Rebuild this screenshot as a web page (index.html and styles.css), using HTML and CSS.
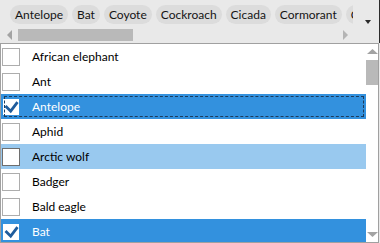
FILE: index.html
```html
<!DOCTYPE html>
<html>
<head>
<meta charset="utf-8">
<link rel="stylesheet" href="styles.css">
</head>
<body>
<div class="top">
  <div class="chips-row">
    <div class="chips">
      <span class="chip">Antelope</span>
      <span class="chip">Bat</span>
      <span class="chip">Coyote</span>
      <span class="chip">Cockroach</span>
      <span class="chip">Cicada</span>
      <span class="chip">Cormorant</span>
      <span class="chip">Crab</span>
    </div>
    <div class="dropdown">
      <svg width="6" height="4" viewBox="0 0 6 4"><path d="M0 0H6L3 4Z" fill="#2a2a2a"/></svg>
    </div>
  </div>
  <div class="hscroll">
    <svg class="harrow" width="5" height="10" viewBox="0 0 5 10"><path d="M5 0V10L0 5Z" fill="#a3a3a3"/></svg>
    <div class="htrack"><div class="hthumb"></div></div>
    <svg class="harrow" width="5" height="10" viewBox="0 0 5 10"><path d="M0 0V10L5 5Z" fill="#b4b4b4"/></svg>
  </div>
</div>
<div class="list">
  <div class="rows">
    <div class="row"><span class="cb"></span><span class="label">African elephant</span></div>
    <div class="row"><span class="cb"></span><span class="label">Ant</span></div>
    <div class="row selected focused"><span class="cb"><svg width="16" height="16" viewBox="0 0 16 16"><path d="M2.5 7L7.7 12.2L14.5 3.2" fill="none" stroke="#1f5c9c" stroke-width="2.8"/></svg></span><span class="label">Antelope</span></div>
    <div class="row"><span class="cb"></span><span class="label">Aphid</span></div>
    <div class="row hover"><span class="cb"></span><span class="label">Arctic wolf</span></div>
    <div class="row"><span class="cb"></span><span class="label">Badger</span></div>
    <div class="row"><span class="cb"></span><span class="label">Bald eagle</span></div>
    <div class="row selected"><span class="cb"><svg width="16" height="16" viewBox="0 0 16 16"><path d="M2.5 7L7.7 12.2L14.5 3.2" fill="none" stroke="#1f5c9c" stroke-width="2.8"/></svg></span><span class="label">Bat</span></div>
  </div>
  <div class="vscroll">
    <svg class="varrow" width="11" height="5" viewBox="0 0 11 5"><path d="M0 5H11L5.5 0Z" fill="#a3a3a3"/></svg>
    <div class="vthumb"></div>
    <div class="vspace"></div>
    <svg class="varrow down" width="11" height="5" viewBox="0 0 11 5"><path d="M0 0H11L5.5 5Z" fill="#a3a3a3"/></svg>
  </div>
</div>
</body>
</html>
```

FILE: styles.css
```css
html, body {
  margin: 0;
  padding: 0;
}
body {
  width: 380px;
  height: 243px;
  overflow: hidden;
  background: #e9e9e9;
  font-family: Lato, "Noto Sans", sans-serif;
  font-size: 12px;
  color: #1a1a1a;
}
.top {
  height: 43px;
  box-sizing: border-box;
  border-right: 1px solid #2b2b2b;
}
.chips-row {
  height: 29px;
  display: flex;
}
.chips {
  width: 353px;
  box-sizing: border-box;
  padding: 5px 0 0 10px;
  display: flex;
  gap: 4px;
  overflow: hidden;
  align-items: flex-start;
}
.chip {
  flex: none;
  height: 19px;
  line-height: 19px;
  padding: 0 5px;
  border-radius: 10px;
  background: #dcdcdc;
  white-space: nowrap;
  color: #141414;
}
.dropdown {
  margin-left: 12px;
  padding-top: 20px;
}
.dropdown svg, .harrow, .varrow {
  display: block;
}
.hscroll {
  height: 12px;
  display: flex;
  align-items: center;
  padding-left: 7px;
}
.htrack {
  width: 331px;
  height: 12px;
}
.hthumb {
  margin-left: 6px;
  width: 115px;
  height: 12px;
  background: #b9b9b9;
}
.list {
  width: 379px;
  height: 200px;
  box-sizing: border-box;
  border: 1px solid #a0a0a0;
  background: #fff;
  display: flex;
  overflow: hidden;
}
.rows {
  width: 365px;
  flex: none;
}
.row {
  position: relative;
  height: 25px;
  display: flex;
  align-items: center;
  color: #000;
}
.cb {
  flex: none;
  width: 18px;
  height: 18px;
  box-sizing: border-box;
  margin-left: 1px;
  border: 1px solid #adadad;
  background: #fff;
  display: flex;
  align-items: center;
  justify-content: center;
}
.label {
  margin-left: 12px;
  white-space: nowrap;
}
.row.selected {
  background: #3391de;
  color: #fff;
}
.row.selected .cb {
  border-color: #3391de;
}
.row.hover {
  background: #99c9ef;
}
.row.hover .cb {
  border-color: #6e6e6e;
}
.row.focused::after {
  content: "";
  position: absolute;
  left: 3px;
  top: 2px;
  right: 2px;
  bottom: 2px;
  border: 1px dashed #1d3b5a;
}
.vscroll {
  width: 12px;
  flex: none;
  display: flex;
  flex-direction: column;
  align-items: center;
  padding-top: 5px;
  padding-bottom: 5px;
  box-sizing: border-box;
}
.vthumb {
  margin-top: 6px;
  width: 12px;
  height: 25px;
  background: #b9b9b9;
}
.vspace {
  flex: 1;
}
```
